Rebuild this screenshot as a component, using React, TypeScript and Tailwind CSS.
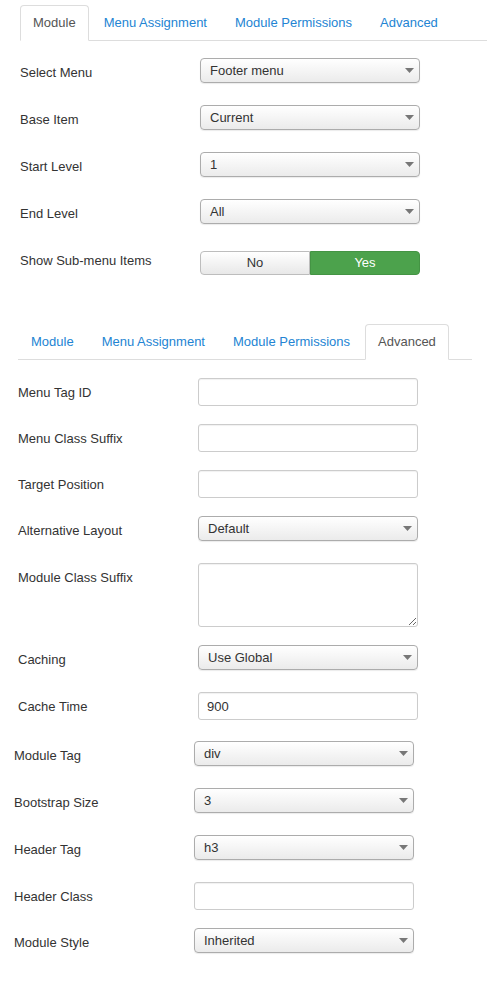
import type { ReactNode } from "react";

const TABS = ["Module", "Menu Assignment", "Module Permissions", "Advanced"];

function Tabs({ active, className }: { active: string; className: string }) {
  return (
    <ul className={`flex border-b border-[#ddd] ${className}`}>
      {TABS.map((t) => (
        <li key={t} className="-mb-px mr-[2px]">
          <a
            className={`block rounded-t-[4px] border px-3 py-2 leading-[18px] ${
              t === active ? "border-[#ddd] border-b-white bg-white text-[#555]" : "border-transparent text-[#2384d3]"
            }`}
          >
            {t}
          </a>
        </li>
      ))}
    </ul>
  );
}

function Row({ label, children, last }: { label: string; children: ReactNode; last?: boolean }) {
  return (
    <div className={`flex ${last ? "" : "mb-[18px]"}`}>
      <div className="w-[180px] shrink-0 pt-[6px] leading-[18px] text-[#333]">{label}</div>
      <div>{children}</div>
    </div>
  );
}

function Select({ value }: { value: string }) {
  return (
    <div className="mb-[4px] flex h-[25px] w-[220px] items-center justify-between rounded-[4px] border border-[#acacac] bg-linear-to-b from-white to-[#ebebeb] pl-[9px] pr-[5px] text-[#333] shadow-[0_1px_1px_rgba(0,0,0,0.08)]">
      <span>{value}</span>
      <svg width="9" height="5" viewBox="0 0 9 5">
        <path d="M0 0h9L4.5 5z" fill="#777" />
      </svg>
    </div>
  );
}

function Input({ value = "" }: { value?: string }) {
  return (
    <input
      readOnly
      value={value}
      className="block h-[28px] w-[220px] rounded-[3px] border border-[#ccc] bg-white px-[8px] text-[13px] text-[#333] shadow-[inset_0_1px_1px_rgba(0,0,0,0.06)] outline-none"
    />
  );
}

function Toggle() {
  return (
    <div className="mt-[5px] flex h-[24px] w-[220px]">
      <div className="flex flex-1 items-center justify-center rounded-l-[4px] border border-[#bdbdbd] bg-linear-to-b from-white to-[#e8e8e8] text-[#333]">
        No
      </div>
      <div className="flex flex-1 items-center justify-center rounded-r-[4px] border border-[#449444] bg-[#4ca24c] text-white">
        Yes
      </div>
    </div>
  );
}

export default function App() {
  return (
    <div className="flex min-h-[989px] w-[487px] flex-col bg-white font-['Liberation_Sans',Arial,sans-serif] text-[13px]">
      <Tabs active="Module" className="ml-[20px] mt-[5px]" />
      <div className="flex flex-col pl-[20px] pt-[17px]">
        <Row label="Select Menu"><Select value="Footer menu" /></Row>
        <Row label="Base Item"><Select value="Current" /></Row>
        <Row label="Start Level"><Select value="1" /></Row>
        <Row label="End Level"><Select value="All" /></Row>
        <Row label="Show Sub-menu Items"><Toggle /></Row>
      </div>

      <Tabs active="Advanced" className="ml-[18px] mt-[31px] w-[454px]" />
      <div className="flex flex-col pl-[18px] pt-[18px]">
        <Row label="Menu Tag ID"><Input /></Row>
        <Row label="Menu Class Suffix"><Input /></Row>
        <Row label="Target Position"><Input /></Row>
        <Row label="Alternative Layout"><Select value="Default" /></Row>
        <Row label="Module Class Suffix">
          <textarea
            readOnly
            className="block h-[64px] w-[220px] rounded-[3px] border border-[#ccc] bg-white shadow-[inset_0_1px_1px_rgba(0,0,0,0.06)] outline-none"
          />
        </Row>
        <Row label="Caching"><Select value="Use Global" /></Row>
        <Row label="Cache Time"><Input value="900" /></Row>
      </div>

      <div className="mt-[3px] flex flex-col pl-[14px]">
        <Row label="Module Tag"><Select value="div" /></Row>
        <Row label="Bootstrap Size"><Select value="3" /></Row>
        <Row label="Header Tag"><Select value="h3" /></Row>
        <Row label="Header Class"><Input /></Row>
        <Row label="Module Style" last><Select value="Inherited" /></Row>
      </div>
    </div>
  );
}
